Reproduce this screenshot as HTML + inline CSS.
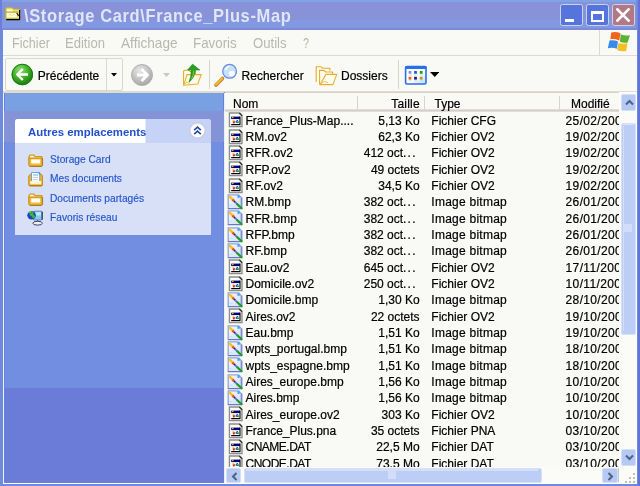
<!DOCTYPE html>
<html><head><meta charset="utf-8">
<style>
*{margin:0;padding:0;box-sizing:border-box}
html,body{width:640px;height:486px;overflow:hidden;background:#6e8ade;font-family:"Liberation Sans",sans-serif}
body{position:relative}
.a{position:absolute}
.t{position:absolute;white-space:nowrap}
.ic{position:absolute}
#title{left:0;top:0;width:640px;height:30px;background:#8892d8}
#menu{left:3px;top:30px;width:634px;height:26px;background:#f9f9f6}
#tool{left:3px;top:56px;width:634px;height:36px;background:#f9f9f6}
#panel{left:3px;top:92px;width:221px;height:391px;background:#728ee0;overflow:hidden}
#list{left:225px;top:92px;width:394px;height:375px;background:#f9f9f6;overflow:hidden}
.lt{position:absolute;white-space:nowrap;font-size:12px;line-height:12px;color:#000;-webkit-text-stroke:0.2px #000}
.mt{position:absolute;white-space:nowrap;font-size:14.5px;line-height:14.5px;color:#b8b8b0}
.tb{position:absolute;white-space:nowrap;font-size:12px;line-height:12px;color:#000;-webkit-text-stroke:0.2px #000}
.pt{position:absolute;white-space:nowrap;font-size:10.2px;line-height:10.2px;color:#2454cc;-webkit-text-stroke:0.15px #2454cc}
.pb{position:absolute;white-space:nowrap;font-size:11.4px;line-height:11.4px;color:#2050c8;font-weight:bold}
</style></head><body><div id="root" style="position:absolute;left:0;top:0;width:640px;height:486px;overflow:hidden;background:#6e8ade;will-change:transform">

<div id="title" class="a">
<div class="a" style="left:0;top:0;width:640px;height:2px;background:#7fa4e4"></div>
<div class="a" style="left:0;top:20px;width:640px;height:8px;background:#8298e0"></div>
<div class="a" style="left:0;top:28px;width:640px;height:2px;background:#7d88d8"></div>
<svg class="a" style="left:2px;top:4px" width="22" height="20" viewBox="2 4 22 20"><path d="M5.8 18.6v-9.6l0.8-1.2h5.6l1 1.4h5.6l0.8 0.9v8.5z" fill="#f2e468" stroke="#c8b820" stroke-width="0.8"/><rect x="7" y="9.6" width="5.6" height="2.2" fill="#fffff4"/><path d="M6 12h12.6" stroke="#a89818" stroke-width="0.9"/><rect x="7" y="13.2" width="9.8" height="4" fill="#fffff0"/><path d="M9 15.6l1.2-1.4 1.4 1.4M12.4 15.6l1.2-1.2 1.2 1.2" stroke="#e8d040" stroke-width="0.8" fill="none"/><path d="M19.6 10v9.6h-13.4" stroke="#000" stroke-width="1.2" fill="none"/><path d="M16.8 13l1.8 2.8" stroke="#202010" stroke-width="1.3"/></svg>
<div class="t" style="left:24px;top:7.63px;font-size:16.5px;line-height:16.5px;font-weight:bold;letter-spacing:0.62px;color:#dfe6f8;transform:scaleY(1.08);transform-origin:0 13.97px">\Storage Card\France_Plus-Map</div>
<div class="a" style="left:559.5px;top:4px;width:23px;height:22px;border-radius:2.5px;background:#5574dc;border:1px solid #c8d4f4"><div class="a" style="left:4px;top:14px;width:9px;height:2.8px;background:#fff"></div></div>
<div class="a" style="left:585.5px;top:4px;width:23px;height:22px;border-radius:2.5px;background:#5574dc;border:1px solid #c8d4f4"><div class="a" style="left:4.5px;top:5.5px;width:13px;height:11px;border:2px solid #fff;border-top-width:3px"></div></div>
<div class="a" style="left:611.5px;top:4px;width:23px;height:22px;border-radius:2.5px;background:#b47882;border:1px solid #c8d4f4"><svg class="a" style="left:3.6px;top:2.6px" width="14" height="14" viewBox="0 0 14 14"><path d="M1.4 1.4L12.6 12.6M12.6 1.4L1.4 12.6" stroke="#fff" stroke-width="2.7" stroke-linecap="square"/></svg></div>
</div>
<div id="menu" class="a"></div>
<div class="mt" style="left:11.8px;top:35.53px;transform:scaleX(0.87);transform-origin:0 0">Fichier</div>
<div class="mt" style="left:65.4px;top:35.53px;transform:scaleX(0.9);transform-origin:0 0">Edition</div>
<div class="mt" style="left:120.8px;top:35.53px;transform:scaleX(0.94);transform-origin:0 0">Affichage</div>
<div class="mt" style="left:193.2px;top:35.53px;transform:scaleX(0.92);transform-origin:0 0">Favoris</div>
<div class="mt" style="left:252.5px;top:35.53px;transform:scaleX(0.905);transform-origin:0 0">Outils</div>
<div class="mt" style="left:302.6px;top:35.53px;transform:scaleX(0.75);transform-origin:0 0">?</div>
<div class="a" style="left:3px;top:55px;width:634px;height:1px;background:#ddd8e0"></div>
<div class="a" style="left:599px;top:30px;width:1px;height:25px;background:#dcdad0"></div>
<svg class="a" style="left:600px;top:28px" width="36" height="27" viewBox="600 28 36 27"><path d="M611.2 32.6q4.5-1.2 9.2 0.6l-1.1 7.2q-4.5-1.6-8.9-1.2z" fill="#f0641e"/><path d="M620.7 34.3q4.6 1.8 9.3 0.9l-2.4 7.2q-3.9 0.8-7.7-0.6z" fill="#5cb034"/><path d="M609.5 40.4q4.3-0.5 8.4 0.8l-0.9 7.5q-4.5-1.4-9.2-0.5z" fill="#3a8ae8"/><path d="M618.4 43q4.5 1.2 9 0.3l-1.2 7.7q-4.5 0.7-8.9-0.8z" fill="#f4c020"/></svg>
<div id="tool" class="a"></div>
<div class="a" style="left:5px;top:57.5px;width:117.5px;height:33px;border:1px solid #dad6cc;border-radius:2px;background:#f9f9f6"></div>
<div class="a" style="left:105.5px;top:58px;width:1px;height:32px;background:#dcd6d4"></div>
<svg class="a" style="left:11.4px;top:63.3px" width="23" height="23" viewBox="0 0 23 23"><defs><radialGradient id="g1" cx="0.4" cy="0.3" r="0.7"><stop offset="0" stop-color="#8ee070"/><stop offset="0.6" stop-color="#3aa820"/><stop offset="1" stop-color="#1c7a10"/></radialGradient></defs><circle cx="11.3" cy="11.5" r="10.7" fill="url(#g1)"/><circle cx="11.3" cy="11.5" r="10.2" fill="none" stroke="#128012" stroke-width="1"/><path d="M11.8 6l-5.6 5.5 5.6 5.5M6.8 11.5h10.2" stroke="#fff" stroke-width="2.4" fill="none" stroke-linejoin="round"/></svg>
<div class="tb" style="left:37.8px;top:69.94px">Précédente</div>
<svg class="a" style="left:110.6px;top:72.8px" width="6" height="4" viewBox="0 0 6 4"><path d="M0 0h6l-3 3.4z" fill="#000"/></svg>
<svg class="a" style="left:131px;top:64px" width="23" height="23" viewBox="0 0 23 23"><defs><radialGradient id="g2" cx="0.4" cy="0.3" r="0.7"><stop offset="0" stop-color="#e8e8e8"/><stop offset="1" stop-color="#a8a8a8"/></radialGradient></defs><circle cx="11" cy="11" r="10.5" fill="url(#g2)" stroke="#b0b0b0"/><path d="M10.5 5l6 6-6 6M16 11h-10" stroke="#fff" stroke-width="2.8" fill="none" stroke-linejoin="round"/></svg>
<svg class="a" style="left:163px;top:73px" width="7" height="4" viewBox="0 0 7 4"><path d="M0 0h7l-3.5 4z" fill="#c8c8c8"/></svg>
<svg class="a" style="left:178px;top:60px" width="28" height="30" viewBox="178 60 28 30"><path d="M183.6 85.2v-14.2l1.2-0.8h4l1.2 1.3h5.5v3" fill="#fffef4" stroke="#e4ac28" stroke-width="1.1"/><path d="M183.8 85.2l3.2-10.6h14.2l-3.4 9.4z" fill="#fffbe8" stroke="#e8b030" stroke-width="1.1"/><path d="M184.5 84.5l2-2.5 3 1.5" stroke="#f0c848" stroke-width="1" fill="none"/><path d="M192.6 64.2l-5 5.8h3.6q0.4 6-2.2 12.2q5.6-4.4 6.4-12.2h4.4z" fill="#2aa020" stroke="#188010" stroke-width="0.6"/><path d="M193.8 70.5q-0.4 5-2.4 9" stroke="#70d050" stroke-width="1" fill="none"/></svg>
<div class="a" style="left:208.5px;top:60px;width:1px;height:29px;background:#d8d6cc"></div>
<svg class="a" style="left:210px;top:60px" width="30" height="30" viewBox="210 60 30 30"><path d="M216 85l6.5-6.5" stroke="#c07818" stroke-width="3.6" stroke-linecap="round"/><path d="M216 84.6l6.2-6.2" stroke="#f0b838" stroke-width="2.2" stroke-linecap="round"/><circle cx="229.6" cy="71.3" r="6.9" fill="#c4e2fc" stroke="#6a90dc" stroke-width="1.3"/><circle cx="231.8" cy="73.6" r="2.8" fill="#fff"/><path d="M225.5 70q1-3 4-3.6" stroke="#fff" stroke-width="1.2" fill="none"/></svg>
<div class="tb" style="left:241.6px;top:69.94px">Rechercher</div>
<svg class="a" style="left:310px;top:60px" width="30" height="30" viewBox="310 60 30 30"><path d="M316.2 82v-15.3h4.8l1.5 1.5h7.3v2.3" fill="#fffef6" stroke="#e4ac28" stroke-width="1.1"/><path d="M319.6 84.6v-14.2h4.4l1.5 1.6h7v2.6" fill="#fffef6" stroke="#e4ac28" stroke-width="1.1"/><path d="M320.2 84.6l5.6-10.2h11l-4 10.2z" fill="#fffdf0" stroke="#e8b030" stroke-width="1.1"/><path d="M321 83.5l3-2 4 1" stroke="#f0c848" stroke-width="1" fill="none"/></svg>
<div class="tb" style="left:341px;top:69.94px">Dossiers</div>
<div class="a" style="left:398px;top:60px;width:1px;height:29px;background:#d8d6cc"></div>
<svg class="a" style="left:400px;top:60px" width="30" height="30" viewBox="400 60 30 30"><defs><linearGradient id="vg" x1="0" y1="0" x2="1" y2="1"><stop offset="0.55" stop-color="#fff"/><stop offset="1" stop-color="#b8dcfc"/></linearGradient></defs><rect x="405.6" y="66.6" width="20.4" height="17.4" rx="1.5" fill="url(#vg)" stroke="#2a6ee8" stroke-width="1.6"/><rect x="405" y="66" width="21.6" height="3" rx="1" fill="#2a6ee8"/><rect x="408.6" y="71" width="2.8" height="2.8" fill="#8090e0"/><rect x="414.1" y="71" width="2.8" height="2.8" fill="#2060e0"/><rect x="419.8" y="71" width="2.8" height="2.8" fill="#20a020"/><rect x="408.6" y="76.8" width="2.8" height="2.8" fill="#f06010"/><rect x="414.1" y="76.8" width="2.8" height="2.8" fill="#102080"/><rect x="419.8" y="76.8" width="2.8" height="2.8" fill="#d09020"/><path d="M408.6 75h3M414.1 75h3M419.8 75h3M408.6 80.8h3M414.1 80.8h3M419.8 80.8h3" stroke="#c8c8c8" stroke-width="0.7"/></svg>
<svg class="a" style="left:429.5px;top:72px" width="9.5" height="5" viewBox="0 0 9.5 5"><path d="M0 0h9.5l-4.75 5z" fill="#000"/></svg>
<div class="a" style="left:3px;top:91px;width:634px;height:1px;background:#e2dccc"></div>
<div id="panel" class="a">
<div class="a" style="left:0;top:0;width:1px;height:391px;background:#f0f4fc"></div>
<div class="a" style="left:1px;top:0;width:220px;height:19px;background:#7aa0e4"></div>
<div class="a" style="left:0;top:0;width:221px;height:1px;background:#e0dccc"></div>
<div class="a" style="left:220px;top:1px;width:1px;height:390px;background:#6a7ee0"></div>
<div class="a" style="left:1px;top:1px;width:1px;height:390px;background:#6a80de"></div>
<div class="a" style="left:1px;top:19px;width:220px;height:31px;background:#8492d8"></div>
<div class="a" style="left:1px;top:296px;width:220px;height:95px;background:#6a7cd8"></div>
<div class="a" style="left:12px;top:27px;width:196px;height:116px;border-radius:3px 3px 0 0;background:#d8e0f8;overflow:hidden">
<div class="a" style="left:0;top:0;width:196px;height:24px;background:linear-gradient(90deg,#fff 0,#fff 130px,#c6d3f7 131px)"></div>
</div>
</div>
<div class="pb" style="left:28px;top:127.35px">Autres emplacements</div>
<svg class="a" style="left:189px;top:122px" width="17" height="17" viewBox="0 0 17 17"><circle cx="8.5" cy="8.5" r="7.6" fill="#fff" stroke="#c8ccd8" stroke-width="1.2"/><path d="M5.2 8.2l3.3-3 3.3 3M5.2 12.2l3.3-3 3.3 3" stroke="#2848a8" stroke-width="1.6" fill="none"/></svg>
<div class="pt" style="left:50px;top:154.97px">Storage Card</div>
<svg class="a" style="left:27.6px;top:154.2px" width="16" height="14" viewBox="0 0 16 14"><path d="M1 4.2v-1.6l1.2-1.4h3.6l1.4 1.4h6.6v3" fill="#fff8e0" stroke="#d89a18" stroke-width="1.3"/><path d="M0.8 11.2v-7.2h13.4v7.4l-0.8 0.8h-11.8z" fill="#f0b830" stroke="#c88810" stroke-width="1"/><rect x="3.2" y="5.4" width="9" height="3.6" fill="#fff"/><path d="M3.2 9.6h9" stroke="#f8d870" stroke-width="1.2"/><path d="M1.6 12.4h12.6M14.6 4.4v7.6" stroke="#806020" stroke-width="0.9" opacity="0.6"/></svg>
<div class="pt" style="left:50px;top:173.97px">Mes documents</div>
<svg class="a" style="left:27.6px;top:172.0px" width="16" height="15" viewBox="0 0 16 15"><path d="M0.8 13.2v-9.4l1.4-1.2h11.4l0.8 1v9.6l-0.8 0.8h-12z" fill="#f0b830" stroke="#c88810" stroke-width="1"/><rect x="3.6" y="0.6" width="8.2" height="10.6" fill="#fff" stroke="#6f8fe0" stroke-width="0.9"/><path d="M5 3h5" stroke="#70c8f0" stroke-width="1.2"/><path d="M5 5.4h5M5 7.6h5" stroke="#b0c4e8" stroke-width="0.9"/><path d="M10.6 0.8l1.6 1.6" stroke="#40a0f0" stroke-width="1.4"/><rect x="2.2" y="9" width="11" height="3.2" fill="#fff4d0"/><path d="M1.6 13.6h12.6" stroke="#806020" stroke-width="0.9" opacity="0.6"/></svg>
<div class="pt" style="left:50px;top:193.57px">Documents partagés</div>
<svg class="a" style="left:27.6px;top:193.2px" width="16" height="14" viewBox="0 0 16 14"><path d="M1 4.2v-1.6l1.2-1.4h3.6l1.4 1.4h6.6v3" fill="#fff8e0" stroke="#d89a18" stroke-width="1.3"/><path d="M0.8 11.2v-7.2h13.4v7.4l-0.8 0.8h-11.8z" fill="#f0b830" stroke="#c88810" stroke-width="1"/><rect x="3.2" y="5.4" width="9" height="3.6" fill="#fff"/><path d="M3.2 9.6h9" stroke="#f8d870" stroke-width="1.2"/><path d="M1.6 12.4h12.6M14.6 4.4v7.6" stroke="#806020" stroke-width="0.9" opacity="0.6"/></svg>
<div class="pt" style="left:50px;top:212.57px">Favoris réseau</div>
<svg class="a" style="left:27.4px;top:210.0px" width="17" height="16" viewBox="0 0 17 16"><rect x="6.4" y="1.2" width="8.6" height="8.8" rx="1" fill="#84ccf8" stroke="#5a78b0" stroke-width="0.9"/><rect x="7.4" y="2.2" width="6.6" height="3.2" fill="#c0e8fc"/><path d="M15.2 1.8v8" stroke="#2a3048" stroke-width="1.1"/><circle cx="4.6" cy="5.2" r="4.3" fill="#1a44c0"/><path d="M2.4 1.6q2.6-1 4.4 0.4l-0.6 2.2 1.8 1.8-0.4 2.4q-2.2 0.4-2.8-2l-2-1.2z" fill="#3cb434"/><path d="M1.2 3.2q1-1.6 2.6-2" stroke="#a0e890" stroke-width="0.8" fill="none"/><ellipse cx="10.6" cy="13.2" rx="4.8" ry="1.9" fill="#eef0f6" stroke="#3a4460" stroke-width="1"/><path d="M10.6 10v1.4" stroke="#5a6480" stroke-width="1.2"/></svg>
<div class="a" style="left:224px;top:93px;width:1px;height:390px;background:#e8eefc"></div>
<div id="list" class="a">
<div class="a" style="left:0;top:0;width:394px;height:18px;background:#f9f9f6"></div>
<div class="a" style="left:0;top:0;width:394px;height:1px;background:#d4d4cc"></div>
<div class="a" style="left:0;top:17px;width:394px;height:1px;background:#e4dae2"></div>
<div class="a" style="left:0;top:18px;width:394px;height:1px;background:#cdd2c2"></div>
<div class="a" style="left:0;top:19px;width:394px;height:1px;background:#deded6"></div>
<div class="a" style="left:132.2px;top:4px;width:1px;height:12.5px;background:#d6d4ca"></div>
<div class="a" style="left:198.8px;top:4px;width:1px;height:12.5px;background:#d6d4ca"></div>
<div class="a" style="left:333.5px;top:4px;width:1px;height:12.5px;background:#d6d4ca"></div>
<div class="lt" style="left:8px;top:6.14px">Nom</div>
<div class="lt" style="right:199.2px;top:6.14px;letter-spacing:0.2px">Taille</div>
<div class="lt" style="left:209.5px;top:6.14px">Type</div>
<div class="lt" style="left:346px;top:6.14px">Modifié</div>
<div class="a" style="left:3.0px;top:20.30px;width:16px;height:16px"><svg class="ic" width="16" height="16" viewBox="0 0 16 16"><path d="M1.45 1.05h10.1l2.4 2.4v11.2h-12.5z" fill="#fff" stroke="#8c8c8c" stroke-width="1.4"/><path d="M11.3 0.9l2.8 2.8" stroke="#383838" stroke-width="1.4"/><rect x="3.2" y="4.6" width="8.8" height="8" fill="#fff"/><rect x="3.2" y="4.6" width="8.8" height="2.5" fill="#000078"/><path d="M12 4.6v8h-8.8" stroke="#000" stroke-width="1.1" fill="none"/><circle cx="4.8" cy="5.4" r="0.8" fill="#f0c030"/><ellipse cx="5.8" cy="9.9" rx="1.1" ry="1.5" fill="#e01818"/><circle cx="5" cy="9" r="0.8" fill="#f0d020"/><circle cx="9.3" cy="8.8" r="0.9" fill="#1838e0"/><circle cx="8.4" cy="9.9" r="0.9" fill="#1838e0"/><circle cx="10.2" cy="10.1" r="0.9" fill="#10a020"/><circle cx="9.3" cy="10.4" r="0.8" fill="#10a020"/><circle cx="9.3" cy="9.6" r="0.6" fill="#20c0e0"/></svg></div>
<div class="lt" style="left:20.5px;top:22.64px">France_Plus-Map....</div>
<div class="lt" style="right:199.4px;top:22.64px">5,13 Ko</div>
<div class="lt" style="left:206.3px;top:22.64px">Fichier CFG</div>
<div class="lt" style="left:340.6px;top:22.64px;letter-spacing:0.35px">25/02/2005</div>
<div class="a" style="left:3.0px;top:36.63px;width:16px;height:16px"><svg class="ic" width="16" height="16" viewBox="0 0 16 16"><path d="M1.45 1.05h10.1l2.4 2.4v11.2h-12.5z" fill="#fff" stroke="#8c8c8c" stroke-width="1.4"/><path d="M11.3 0.9l2.8 2.8" stroke="#383838" stroke-width="1.4"/><rect x="3.2" y="4.6" width="8.8" height="8" fill="#fff"/><rect x="3.2" y="4.6" width="8.8" height="2.5" fill="#000078"/><path d="M12 4.6v8h-8.8" stroke="#000" stroke-width="1.1" fill="none"/><circle cx="4.8" cy="5.4" r="0.8" fill="#f0c030"/><ellipse cx="5.8" cy="9.9" rx="1.1" ry="1.5" fill="#e01818"/><circle cx="5" cy="9" r="0.8" fill="#f0d020"/><circle cx="9.3" cy="8.8" r="0.9" fill="#1838e0"/><circle cx="8.4" cy="9.9" r="0.9" fill="#1838e0"/><circle cx="10.2" cy="10.1" r="0.9" fill="#10a020"/><circle cx="9.3" cy="10.4" r="0.8" fill="#10a020"/><circle cx="9.3" cy="9.6" r="0.6" fill="#20c0e0"/></svg></div>
<div class="lt" style="left:20.5px;top:38.97px">RM.ov2</div>
<div class="lt" style="right:199.4px;top:38.97px">62,3 Ko</div>
<div class="lt" style="left:206.3px;top:38.97px">Fichier OV2</div>
<div class="lt" style="left:340.6px;top:38.97px;letter-spacing:0.35px">19/02/2005</div>
<div class="a" style="left:3.0px;top:52.96px;width:16px;height:16px"><svg class="ic" width="16" height="16" viewBox="0 0 16 16"><path d="M1.45 1.05h10.1l2.4 2.4v11.2h-12.5z" fill="#fff" stroke="#8c8c8c" stroke-width="1.4"/><path d="M11.3 0.9l2.8 2.8" stroke="#383838" stroke-width="1.4"/><rect x="3.2" y="4.6" width="8.8" height="8" fill="#fff"/><rect x="3.2" y="4.6" width="8.8" height="2.5" fill="#000078"/><path d="M12 4.6v8h-8.8" stroke="#000" stroke-width="1.1" fill="none"/><circle cx="4.8" cy="5.4" r="0.8" fill="#f0c030"/><ellipse cx="5.8" cy="9.9" rx="1.1" ry="1.5" fill="#e01818"/><circle cx="5" cy="9" r="0.8" fill="#f0d020"/><circle cx="9.3" cy="8.8" r="0.9" fill="#1838e0"/><circle cx="8.4" cy="9.9" r="0.9" fill="#1838e0"/><circle cx="10.2" cy="10.1" r="0.9" fill="#10a020"/><circle cx="9.3" cy="10.4" r="0.8" fill="#10a020"/><circle cx="9.3" cy="9.6" r="0.6" fill="#20c0e0"/></svg></div>
<div class="lt" style="left:20.5px;top:55.30px">RFR.ov2</div>
<div class="lt" style="right:203.5px;top:55.30px">412 oct<span style="letter-spacing:1.2px">..</span>.</div>
<div class="lt" style="left:206.3px;top:55.30px">Fichier OV2</div>
<div class="lt" style="left:340.6px;top:55.30px;letter-spacing:0.35px">19/02/2005</div>
<div class="a" style="left:3.0px;top:69.29px;width:16px;height:16px"><svg class="ic" width="16" height="16" viewBox="0 0 16 16"><path d="M1.45 1.05h10.1l2.4 2.4v11.2h-12.5z" fill="#fff" stroke="#8c8c8c" stroke-width="1.4"/><path d="M11.3 0.9l2.8 2.8" stroke="#383838" stroke-width="1.4"/><rect x="3.2" y="4.6" width="8.8" height="8" fill="#fff"/><rect x="3.2" y="4.6" width="8.8" height="2.5" fill="#000078"/><path d="M12 4.6v8h-8.8" stroke="#000" stroke-width="1.1" fill="none"/><circle cx="4.8" cy="5.4" r="0.8" fill="#f0c030"/><ellipse cx="5.8" cy="9.9" rx="1.1" ry="1.5" fill="#e01818"/><circle cx="5" cy="9" r="0.8" fill="#f0d020"/><circle cx="9.3" cy="8.8" r="0.9" fill="#1838e0"/><circle cx="8.4" cy="9.9" r="0.9" fill="#1838e0"/><circle cx="10.2" cy="10.1" r="0.9" fill="#10a020"/><circle cx="9.3" cy="10.4" r="0.8" fill="#10a020"/><circle cx="9.3" cy="9.6" r="0.6" fill="#20c0e0"/></svg></div>
<div class="lt" style="left:20.5px;top:71.63px">RFP.ov2</div>
<div class="lt" style="right:199.4px;top:71.63px">49 octets</div>
<div class="lt" style="left:206.3px;top:71.63px">Fichier OV2</div>
<div class="lt" style="left:340.6px;top:71.63px;letter-spacing:0.35px">19/02/2005</div>
<div class="a" style="left:3.0px;top:85.62px;width:16px;height:16px"><svg class="ic" width="16" height="16" viewBox="0 0 16 16"><path d="M1.45 1.05h10.1l2.4 2.4v11.2h-12.5z" fill="#fff" stroke="#8c8c8c" stroke-width="1.4"/><path d="M11.3 0.9l2.8 2.8" stroke="#383838" stroke-width="1.4"/><rect x="3.2" y="4.6" width="8.8" height="8" fill="#fff"/><rect x="3.2" y="4.6" width="8.8" height="2.5" fill="#000078"/><path d="M12 4.6v8h-8.8" stroke="#000" stroke-width="1.1" fill="none"/><circle cx="4.8" cy="5.4" r="0.8" fill="#f0c030"/><ellipse cx="5.8" cy="9.9" rx="1.1" ry="1.5" fill="#e01818"/><circle cx="5" cy="9" r="0.8" fill="#f0d020"/><circle cx="9.3" cy="8.8" r="0.9" fill="#1838e0"/><circle cx="8.4" cy="9.9" r="0.9" fill="#1838e0"/><circle cx="10.2" cy="10.1" r="0.9" fill="#10a020"/><circle cx="9.3" cy="10.4" r="0.8" fill="#10a020"/><circle cx="9.3" cy="9.6" r="0.6" fill="#20c0e0"/></svg></div>
<div class="lt" style="left:20.5px;top:87.96px">RF.ov2</div>
<div class="lt" style="right:199.4px;top:87.96px">34,5 Ko</div>
<div class="lt" style="left:206.3px;top:87.96px">Fichier OV2</div>
<div class="lt" style="left:340.6px;top:87.96px;letter-spacing:0.35px">19/02/2005</div>
<div class="a" style="left:2.2px;top:101.95px;width:16px;height:16px"><svg class="ic" width="17" height="16" viewBox="0 0 17 16"><defs><linearGradient id="bg" x1="0" y1="0" x2="1" y2="1"><stop offset="0" stop-color="#f6f8fe"/><stop offset="1" stop-color="#d0dcf8"/></linearGradient></defs><path d="M1.2 0.9h10.4l2.6 2.6v11.1h-13z" fill="url(#bg)" stroke="#8ea4e0" stroke-width="1.3"/><path d="M10.4 1.2h2.4v2.6h-2.4z" fill="#4aa0f0"/><path d="M1 14.6h13.4M14.9 3.6v11" stroke="#6070b8" stroke-width="0.9"/><path d="M2.9 2.9l2.8 2.8" stroke="#f4c418" stroke-width="2.6" stroke-linecap="round"/><path d="M5.5 5.5l1.6 1.6" stroke="#e84c10" stroke-width="2.4"/><path d="M7.1 7.1l1 1" stroke="#202060" stroke-width="2"/><path d="M8.1 8.1l2.3 2.3" stroke="#5870e8" stroke-width="2"/><path d="M10.4 10.4l4.2 3.8" stroke="#18a018" stroke-width="2.1" stroke-linecap="round"/><path d="M2.5 11.8l3-0.8" stroke="#c0e4fc" stroke-width="1.2"/></svg></div>
<div class="lt" style="left:20.5px;top:104.29px">RM.bmp</div>
<div class="lt" style="right:203.5px;top:104.29px">382 oct<span style="letter-spacing:1.2px">..</span>.</div>
<div class="lt" style="left:206.3px;top:104.29px;letter-spacing:0.25px">Image bitmap</div>
<div class="lt" style="left:340.6px;top:104.29px;letter-spacing:0.35px">26/01/2005</div>
<div class="a" style="left:2.2px;top:118.28px;width:16px;height:16px"><svg class="ic" width="17" height="16" viewBox="0 0 17 16"><defs><linearGradient id="bg" x1="0" y1="0" x2="1" y2="1"><stop offset="0" stop-color="#f6f8fe"/><stop offset="1" stop-color="#d0dcf8"/></linearGradient></defs><path d="M1.2 0.9h10.4l2.6 2.6v11.1h-13z" fill="url(#bg)" stroke="#8ea4e0" stroke-width="1.3"/><path d="M10.4 1.2h2.4v2.6h-2.4z" fill="#4aa0f0"/><path d="M1 14.6h13.4M14.9 3.6v11" stroke="#6070b8" stroke-width="0.9"/><path d="M2.9 2.9l2.8 2.8" stroke="#f4c418" stroke-width="2.6" stroke-linecap="round"/><path d="M5.5 5.5l1.6 1.6" stroke="#e84c10" stroke-width="2.4"/><path d="M7.1 7.1l1 1" stroke="#202060" stroke-width="2"/><path d="M8.1 8.1l2.3 2.3" stroke="#5870e8" stroke-width="2"/><path d="M10.4 10.4l4.2 3.8" stroke="#18a018" stroke-width="2.1" stroke-linecap="round"/><path d="M2.5 11.8l3-0.8" stroke="#c0e4fc" stroke-width="1.2"/></svg></div>
<div class="lt" style="left:20.5px;top:120.62px">RFR.bmp</div>
<div class="lt" style="right:203.5px;top:120.62px">382 oct<span style="letter-spacing:1.2px">..</span>.</div>
<div class="lt" style="left:206.3px;top:120.62px;letter-spacing:0.25px">Image bitmap</div>
<div class="lt" style="left:340.6px;top:120.62px;letter-spacing:0.35px">26/01/2005</div>
<div class="a" style="left:2.2px;top:134.61px;width:16px;height:16px"><svg class="ic" width="17" height="16" viewBox="0 0 17 16"><defs><linearGradient id="bg" x1="0" y1="0" x2="1" y2="1"><stop offset="0" stop-color="#f6f8fe"/><stop offset="1" stop-color="#d0dcf8"/></linearGradient></defs><path d="M1.2 0.9h10.4l2.6 2.6v11.1h-13z" fill="url(#bg)" stroke="#8ea4e0" stroke-width="1.3"/><path d="M10.4 1.2h2.4v2.6h-2.4z" fill="#4aa0f0"/><path d="M1 14.6h13.4M14.9 3.6v11" stroke="#6070b8" stroke-width="0.9"/><path d="M2.9 2.9l2.8 2.8" stroke="#f4c418" stroke-width="2.6" stroke-linecap="round"/><path d="M5.5 5.5l1.6 1.6" stroke="#e84c10" stroke-width="2.4"/><path d="M7.1 7.1l1 1" stroke="#202060" stroke-width="2"/><path d="M8.1 8.1l2.3 2.3" stroke="#5870e8" stroke-width="2"/><path d="M10.4 10.4l4.2 3.8" stroke="#18a018" stroke-width="2.1" stroke-linecap="round"/><path d="M2.5 11.8l3-0.8" stroke="#c0e4fc" stroke-width="1.2"/></svg></div>
<div class="lt" style="left:20.5px;top:136.95px">RFP.bmp</div>
<div class="lt" style="right:203.5px;top:136.95px">382 oct<span style="letter-spacing:1.2px">..</span>.</div>
<div class="lt" style="left:206.3px;top:136.95px;letter-spacing:0.25px">Image bitmap</div>
<div class="lt" style="left:340.6px;top:136.95px;letter-spacing:0.35px">26/01/2005</div>
<div class="a" style="left:2.2px;top:150.94px;width:16px;height:16px"><svg class="ic" width="17" height="16" viewBox="0 0 17 16"><defs><linearGradient id="bg" x1="0" y1="0" x2="1" y2="1"><stop offset="0" stop-color="#f6f8fe"/><stop offset="1" stop-color="#d0dcf8"/></linearGradient></defs><path d="M1.2 0.9h10.4l2.6 2.6v11.1h-13z" fill="url(#bg)" stroke="#8ea4e0" stroke-width="1.3"/><path d="M10.4 1.2h2.4v2.6h-2.4z" fill="#4aa0f0"/><path d="M1 14.6h13.4M14.9 3.6v11" stroke="#6070b8" stroke-width="0.9"/><path d="M2.9 2.9l2.8 2.8" stroke="#f4c418" stroke-width="2.6" stroke-linecap="round"/><path d="M5.5 5.5l1.6 1.6" stroke="#e84c10" stroke-width="2.4"/><path d="M7.1 7.1l1 1" stroke="#202060" stroke-width="2"/><path d="M8.1 8.1l2.3 2.3" stroke="#5870e8" stroke-width="2"/><path d="M10.4 10.4l4.2 3.8" stroke="#18a018" stroke-width="2.1" stroke-linecap="round"/><path d="M2.5 11.8l3-0.8" stroke="#c0e4fc" stroke-width="1.2"/></svg></div>
<div class="lt" style="left:20.5px;top:153.28px">RF.bmp</div>
<div class="lt" style="right:203.5px;top:153.28px">382 oct<span style="letter-spacing:1.2px">..</span>.</div>
<div class="lt" style="left:206.3px;top:153.28px;letter-spacing:0.25px">Image bitmap</div>
<div class="lt" style="left:340.6px;top:153.28px;letter-spacing:0.35px">26/01/2005</div>
<div class="a" style="left:3.0px;top:167.27px;width:16px;height:16px"><svg class="ic" width="16" height="16" viewBox="0 0 16 16"><path d="M1.45 1.05h10.1l2.4 2.4v11.2h-12.5z" fill="#fff" stroke="#8c8c8c" stroke-width="1.4"/><path d="M11.3 0.9l2.8 2.8" stroke="#383838" stroke-width="1.4"/><rect x="3.2" y="4.6" width="8.8" height="8" fill="#fff"/><rect x="3.2" y="4.6" width="8.8" height="2.5" fill="#000078"/><path d="M12 4.6v8h-8.8" stroke="#000" stroke-width="1.1" fill="none"/><circle cx="4.8" cy="5.4" r="0.8" fill="#f0c030"/><ellipse cx="5.8" cy="9.9" rx="1.1" ry="1.5" fill="#e01818"/><circle cx="5" cy="9" r="0.8" fill="#f0d020"/><circle cx="9.3" cy="8.8" r="0.9" fill="#1838e0"/><circle cx="8.4" cy="9.9" r="0.9" fill="#1838e0"/><circle cx="10.2" cy="10.1" r="0.9" fill="#10a020"/><circle cx="9.3" cy="10.4" r="0.8" fill="#10a020"/><circle cx="9.3" cy="9.6" r="0.6" fill="#20c0e0"/></svg></div>
<div class="lt" style="left:20.5px;top:169.61px">Eau.ov2</div>
<div class="lt" style="right:203.5px;top:169.61px">645 oct<span style="letter-spacing:1.2px">..</span>.</div>
<div class="lt" style="left:206.3px;top:169.61px">Fichier OV2</div>
<div class="lt" style="left:340.6px;top:169.61px;letter-spacing:0.35px">17/11/2004</div>
<div class="a" style="left:3.0px;top:183.60px;width:16px;height:16px"><svg class="ic" width="16" height="16" viewBox="0 0 16 16"><path d="M1.45 1.05h10.1l2.4 2.4v11.2h-12.5z" fill="#fff" stroke="#8c8c8c" stroke-width="1.4"/><path d="M11.3 0.9l2.8 2.8" stroke="#383838" stroke-width="1.4"/><rect x="3.2" y="4.6" width="8.8" height="8" fill="#fff"/><rect x="3.2" y="4.6" width="8.8" height="2.5" fill="#000078"/><path d="M12 4.6v8h-8.8" stroke="#000" stroke-width="1.1" fill="none"/><circle cx="4.8" cy="5.4" r="0.8" fill="#f0c030"/><ellipse cx="5.8" cy="9.9" rx="1.1" ry="1.5" fill="#e01818"/><circle cx="5" cy="9" r="0.8" fill="#f0d020"/><circle cx="9.3" cy="8.8" r="0.9" fill="#1838e0"/><circle cx="8.4" cy="9.9" r="0.9" fill="#1838e0"/><circle cx="10.2" cy="10.1" r="0.9" fill="#10a020"/><circle cx="9.3" cy="10.4" r="0.8" fill="#10a020"/><circle cx="9.3" cy="9.6" r="0.6" fill="#20c0e0"/></svg></div>
<div class="lt" style="left:20.5px;top:185.94px">Domicile.ov2</div>
<div class="lt" style="right:203.5px;top:185.94px">250 oct<span style="letter-spacing:1.2px">..</span>.</div>
<div class="lt" style="left:206.3px;top:185.94px">Fichier OV2</div>
<div class="lt" style="left:340.6px;top:185.94px;letter-spacing:0.35px">10/11/2004</div>
<div class="a" style="left:2.2px;top:199.93px;width:16px;height:16px"><svg class="ic" width="17" height="16" viewBox="0 0 17 16"><defs><linearGradient id="bg" x1="0" y1="0" x2="1" y2="1"><stop offset="0" stop-color="#f6f8fe"/><stop offset="1" stop-color="#d0dcf8"/></linearGradient></defs><path d="M1.2 0.9h10.4l2.6 2.6v11.1h-13z" fill="url(#bg)" stroke="#8ea4e0" stroke-width="1.3"/><path d="M10.4 1.2h2.4v2.6h-2.4z" fill="#4aa0f0"/><path d="M1 14.6h13.4M14.9 3.6v11" stroke="#6070b8" stroke-width="0.9"/><path d="M2.9 2.9l2.8 2.8" stroke="#f4c418" stroke-width="2.6" stroke-linecap="round"/><path d="M5.5 5.5l1.6 1.6" stroke="#e84c10" stroke-width="2.4"/><path d="M7.1 7.1l1 1" stroke="#202060" stroke-width="2"/><path d="M8.1 8.1l2.3 2.3" stroke="#5870e8" stroke-width="2"/><path d="M10.4 10.4l4.2 3.8" stroke="#18a018" stroke-width="2.1" stroke-linecap="round"/><path d="M2.5 11.8l3-0.8" stroke="#c0e4fc" stroke-width="1.2"/></svg></div>
<div class="lt" style="left:20.5px;top:202.27px">Domicile.bmp</div>
<div class="lt" style="right:199.4px;top:202.27px">1,30 Ko</div>
<div class="lt" style="left:206.3px;top:202.27px;letter-spacing:0.25px">Image bitmap</div>
<div class="lt" style="left:340.6px;top:202.27px;letter-spacing:0.35px">28/10/2004</div>
<div class="a" style="left:3.0px;top:216.26px;width:16px;height:16px"><svg class="ic" width="16" height="16" viewBox="0 0 16 16"><path d="M1.45 1.05h10.1l2.4 2.4v11.2h-12.5z" fill="#fff" stroke="#8c8c8c" stroke-width="1.4"/><path d="M11.3 0.9l2.8 2.8" stroke="#383838" stroke-width="1.4"/><rect x="3.2" y="4.6" width="8.8" height="8" fill="#fff"/><rect x="3.2" y="4.6" width="8.8" height="2.5" fill="#000078"/><path d="M12 4.6v8h-8.8" stroke="#000" stroke-width="1.1" fill="none"/><circle cx="4.8" cy="5.4" r="0.8" fill="#f0c030"/><ellipse cx="5.8" cy="9.9" rx="1.1" ry="1.5" fill="#e01818"/><circle cx="5" cy="9" r="0.8" fill="#f0d020"/><circle cx="9.3" cy="8.8" r="0.9" fill="#1838e0"/><circle cx="8.4" cy="9.9" r="0.9" fill="#1838e0"/><circle cx="10.2" cy="10.1" r="0.9" fill="#10a020"/><circle cx="9.3" cy="10.4" r="0.8" fill="#10a020"/><circle cx="9.3" cy="9.6" r="0.6" fill="#20c0e0"/></svg></div>
<div class="lt" style="left:20.5px;top:218.60px">Aires.ov2</div>
<div class="lt" style="right:199.4px;top:218.60px">22 octets</div>
<div class="lt" style="left:206.3px;top:218.60px">Fichier OV2</div>
<div class="lt" style="left:340.6px;top:218.60px;letter-spacing:0.35px">19/10/2004</div>
<div class="a" style="left:2.2px;top:232.59px;width:16px;height:16px"><svg class="ic" width="17" height="16" viewBox="0 0 17 16"><defs><linearGradient id="bg" x1="0" y1="0" x2="1" y2="1"><stop offset="0" stop-color="#f6f8fe"/><stop offset="1" stop-color="#d0dcf8"/></linearGradient></defs><path d="M1.2 0.9h10.4l2.6 2.6v11.1h-13z" fill="url(#bg)" stroke="#8ea4e0" stroke-width="1.3"/><path d="M10.4 1.2h2.4v2.6h-2.4z" fill="#4aa0f0"/><path d="M1 14.6h13.4M14.9 3.6v11" stroke="#6070b8" stroke-width="0.9"/><path d="M2.9 2.9l2.8 2.8" stroke="#f4c418" stroke-width="2.6" stroke-linecap="round"/><path d="M5.5 5.5l1.6 1.6" stroke="#e84c10" stroke-width="2.4"/><path d="M7.1 7.1l1 1" stroke="#202060" stroke-width="2"/><path d="M8.1 8.1l2.3 2.3" stroke="#5870e8" stroke-width="2"/><path d="M10.4 10.4l4.2 3.8" stroke="#18a018" stroke-width="2.1" stroke-linecap="round"/><path d="M2.5 11.8l3-0.8" stroke="#c0e4fc" stroke-width="1.2"/></svg></div>
<div class="lt" style="left:20.5px;top:234.93px">Eau.bmp</div>
<div class="lt" style="right:199.4px;top:234.93px">1,51 Ko</div>
<div class="lt" style="left:206.3px;top:234.93px;letter-spacing:0.25px">Image bitmap</div>
<div class="lt" style="left:340.6px;top:234.93px;letter-spacing:0.35px">19/10/2004</div>
<div class="a" style="left:2.2px;top:248.92px;width:16px;height:16px"><svg class="ic" width="17" height="16" viewBox="0 0 17 16"><defs><linearGradient id="bg" x1="0" y1="0" x2="1" y2="1"><stop offset="0" stop-color="#f6f8fe"/><stop offset="1" stop-color="#d0dcf8"/></linearGradient></defs><path d="M1.2 0.9h10.4l2.6 2.6v11.1h-13z" fill="url(#bg)" stroke="#8ea4e0" stroke-width="1.3"/><path d="M10.4 1.2h2.4v2.6h-2.4z" fill="#4aa0f0"/><path d="M1 14.6h13.4M14.9 3.6v11" stroke="#6070b8" stroke-width="0.9"/><path d="M2.9 2.9l2.8 2.8" stroke="#f4c418" stroke-width="2.6" stroke-linecap="round"/><path d="M5.5 5.5l1.6 1.6" stroke="#e84c10" stroke-width="2.4"/><path d="M7.1 7.1l1 1" stroke="#202060" stroke-width="2"/><path d="M8.1 8.1l2.3 2.3" stroke="#5870e8" stroke-width="2"/><path d="M10.4 10.4l4.2 3.8" stroke="#18a018" stroke-width="2.1" stroke-linecap="round"/><path d="M2.5 11.8l3-0.8" stroke="#c0e4fc" stroke-width="1.2"/></svg></div>
<div class="lt" style="left:20.5px;top:251.26px">wpts_portugal.bmp</div>
<div class="lt" style="right:199.4px;top:251.26px">1,51 Ko</div>
<div class="lt" style="left:206.3px;top:251.26px;letter-spacing:0.25px">Image bitmap</div>
<div class="lt" style="left:340.6px;top:251.26px;letter-spacing:0.35px">18/10/2004</div>
<div class="a" style="left:2.2px;top:265.25px;width:16px;height:16px"><svg class="ic" width="17" height="16" viewBox="0 0 17 16"><defs><linearGradient id="bg" x1="0" y1="0" x2="1" y2="1"><stop offset="0" stop-color="#f6f8fe"/><stop offset="1" stop-color="#d0dcf8"/></linearGradient></defs><path d="M1.2 0.9h10.4l2.6 2.6v11.1h-13z" fill="url(#bg)" stroke="#8ea4e0" stroke-width="1.3"/><path d="M10.4 1.2h2.4v2.6h-2.4z" fill="#4aa0f0"/><path d="M1 14.6h13.4M14.9 3.6v11" stroke="#6070b8" stroke-width="0.9"/><path d="M2.9 2.9l2.8 2.8" stroke="#f4c418" stroke-width="2.6" stroke-linecap="round"/><path d="M5.5 5.5l1.6 1.6" stroke="#e84c10" stroke-width="2.4"/><path d="M7.1 7.1l1 1" stroke="#202060" stroke-width="2"/><path d="M8.1 8.1l2.3 2.3" stroke="#5870e8" stroke-width="2"/><path d="M10.4 10.4l4.2 3.8" stroke="#18a018" stroke-width="2.1" stroke-linecap="round"/><path d="M2.5 11.8l3-0.8" stroke="#c0e4fc" stroke-width="1.2"/></svg></div>
<div class="lt" style="left:20.5px;top:267.59px">wpts_espagne.bmp</div>
<div class="lt" style="right:199.4px;top:267.59px">1,51 Ko</div>
<div class="lt" style="left:206.3px;top:267.59px;letter-spacing:0.25px">Image bitmap</div>
<div class="lt" style="left:340.6px;top:267.59px;letter-spacing:0.35px">18/10/2004</div>
<div class="a" style="left:2.2px;top:281.58px;width:16px;height:16px"><svg class="ic" width="17" height="16" viewBox="0 0 17 16"><defs><linearGradient id="bg" x1="0" y1="0" x2="1" y2="1"><stop offset="0" stop-color="#f6f8fe"/><stop offset="1" stop-color="#d0dcf8"/></linearGradient></defs><path d="M1.2 0.9h10.4l2.6 2.6v11.1h-13z" fill="url(#bg)" stroke="#8ea4e0" stroke-width="1.3"/><path d="M10.4 1.2h2.4v2.6h-2.4z" fill="#4aa0f0"/><path d="M1 14.6h13.4M14.9 3.6v11" stroke="#6070b8" stroke-width="0.9"/><path d="M2.9 2.9l2.8 2.8" stroke="#f4c418" stroke-width="2.6" stroke-linecap="round"/><path d="M5.5 5.5l1.6 1.6" stroke="#e84c10" stroke-width="2.4"/><path d="M7.1 7.1l1 1" stroke="#202060" stroke-width="2"/><path d="M8.1 8.1l2.3 2.3" stroke="#5870e8" stroke-width="2"/><path d="M10.4 10.4l4.2 3.8" stroke="#18a018" stroke-width="2.1" stroke-linecap="round"/><path d="M2.5 11.8l3-0.8" stroke="#c0e4fc" stroke-width="1.2"/></svg></div>
<div class="lt" style="left:20.5px;top:283.92px">Aires_europe.bmp</div>
<div class="lt" style="right:199.4px;top:283.92px">1,56 Ko</div>
<div class="lt" style="left:206.3px;top:283.92px;letter-spacing:0.25px">Image bitmap</div>
<div class="lt" style="left:340.6px;top:283.92px;letter-spacing:0.35px">10/10/2004</div>
<div class="a" style="left:2.2px;top:297.91px;width:16px;height:16px"><svg class="ic" width="17" height="16" viewBox="0 0 17 16"><defs><linearGradient id="bg" x1="0" y1="0" x2="1" y2="1"><stop offset="0" stop-color="#f6f8fe"/><stop offset="1" stop-color="#d0dcf8"/></linearGradient></defs><path d="M1.2 0.9h10.4l2.6 2.6v11.1h-13z" fill="url(#bg)" stroke="#8ea4e0" stroke-width="1.3"/><path d="M10.4 1.2h2.4v2.6h-2.4z" fill="#4aa0f0"/><path d="M1 14.6h13.4M14.9 3.6v11" stroke="#6070b8" stroke-width="0.9"/><path d="M2.9 2.9l2.8 2.8" stroke="#f4c418" stroke-width="2.6" stroke-linecap="round"/><path d="M5.5 5.5l1.6 1.6" stroke="#e84c10" stroke-width="2.4"/><path d="M7.1 7.1l1 1" stroke="#202060" stroke-width="2"/><path d="M8.1 8.1l2.3 2.3" stroke="#5870e8" stroke-width="2"/><path d="M10.4 10.4l4.2 3.8" stroke="#18a018" stroke-width="2.1" stroke-linecap="round"/><path d="M2.5 11.8l3-0.8" stroke="#c0e4fc" stroke-width="1.2"/></svg></div>
<div class="lt" style="left:20.5px;top:300.25px">Aires.bmp</div>
<div class="lt" style="right:199.4px;top:300.25px">1,56 Ko</div>
<div class="lt" style="left:206.3px;top:300.25px;letter-spacing:0.25px">Image bitmap</div>
<div class="lt" style="left:340.6px;top:300.25px;letter-spacing:0.35px">10/10/2004</div>
<div class="a" style="left:3.0px;top:314.24px;width:16px;height:16px"><svg class="ic" width="16" height="16" viewBox="0 0 16 16"><path d="M1.45 1.05h10.1l2.4 2.4v11.2h-12.5z" fill="#fff" stroke="#8c8c8c" stroke-width="1.4"/><path d="M11.3 0.9l2.8 2.8" stroke="#383838" stroke-width="1.4"/><rect x="3.2" y="4.6" width="8.8" height="8" fill="#fff"/><rect x="3.2" y="4.6" width="8.8" height="2.5" fill="#000078"/><path d="M12 4.6v8h-8.8" stroke="#000" stroke-width="1.1" fill="none"/><circle cx="4.8" cy="5.4" r="0.8" fill="#f0c030"/><ellipse cx="5.8" cy="9.9" rx="1.1" ry="1.5" fill="#e01818"/><circle cx="5" cy="9" r="0.8" fill="#f0d020"/><circle cx="9.3" cy="8.8" r="0.9" fill="#1838e0"/><circle cx="8.4" cy="9.9" r="0.9" fill="#1838e0"/><circle cx="10.2" cy="10.1" r="0.9" fill="#10a020"/><circle cx="9.3" cy="10.4" r="0.8" fill="#10a020"/><circle cx="9.3" cy="9.6" r="0.6" fill="#20c0e0"/></svg></div>
<div class="lt" style="left:20.5px;top:316.58px">Aires_europe.ov2</div>
<div class="lt" style="right:199.4px;top:316.58px">303 Ko</div>
<div class="lt" style="left:206.3px;top:316.58px">Fichier OV2</div>
<div class="lt" style="left:340.6px;top:316.58px;letter-spacing:0.35px">10/10/2004</div>
<div class="a" style="left:3.0px;top:330.57px;width:16px;height:16px"><svg class="ic" width="16" height="16" viewBox="0 0 16 16"><path d="M1.45 1.05h10.1l2.4 2.4v11.2h-12.5z" fill="#fff" stroke="#8c8c8c" stroke-width="1.4"/><path d="M11.3 0.9l2.8 2.8" stroke="#383838" stroke-width="1.4"/><rect x="3.2" y="4.6" width="8.8" height="8" fill="#fff"/><rect x="3.2" y="4.6" width="8.8" height="2.5" fill="#000078"/><path d="M12 4.6v8h-8.8" stroke="#000" stroke-width="1.1" fill="none"/><circle cx="4.8" cy="5.4" r="0.8" fill="#f0c030"/><ellipse cx="5.8" cy="9.9" rx="1.1" ry="1.5" fill="#e01818"/><circle cx="5" cy="9" r="0.8" fill="#f0d020"/><circle cx="9.3" cy="8.8" r="0.9" fill="#1838e0"/><circle cx="8.4" cy="9.9" r="0.9" fill="#1838e0"/><circle cx="10.2" cy="10.1" r="0.9" fill="#10a020"/><circle cx="9.3" cy="10.4" r="0.8" fill="#10a020"/><circle cx="9.3" cy="9.6" r="0.6" fill="#20c0e0"/></svg></div>
<div class="lt" style="left:20.5px;top:332.91px">France_Plus.pna</div>
<div class="lt" style="right:199.4px;top:332.91px">35 octets</div>
<div class="lt" style="left:206.3px;top:332.91px">Fichier PNA</div>
<div class="lt" style="left:340.6px;top:332.91px;letter-spacing:0.35px">03/10/2004</div>
<div class="a" style="left:3.0px;top:346.90px;width:16px;height:16px"><svg class="ic" width="16" height="16" viewBox="0 0 16 16"><path d="M1.45 1.05h10.1l2.4 2.4v11.2h-12.5z" fill="#fff" stroke="#8c8c8c" stroke-width="1.4"/><path d="M11.3 0.9l2.8 2.8" stroke="#383838" stroke-width="1.4"/><rect x="3.2" y="4.6" width="8.8" height="8" fill="#fff"/><rect x="3.2" y="4.6" width="8.8" height="2.5" fill="#000078"/><path d="M12 4.6v8h-8.8" stroke="#000" stroke-width="1.1" fill="none"/><circle cx="4.8" cy="5.4" r="0.8" fill="#f0c030"/><ellipse cx="5.8" cy="9.9" rx="1.1" ry="1.5" fill="#e01818"/><circle cx="5" cy="9" r="0.8" fill="#f0d020"/><circle cx="9.3" cy="8.8" r="0.9" fill="#1838e0"/><circle cx="8.4" cy="9.9" r="0.9" fill="#1838e0"/><circle cx="10.2" cy="10.1" r="0.9" fill="#10a020"/><circle cx="9.3" cy="10.4" r="0.8" fill="#10a020"/><circle cx="9.3" cy="9.6" r="0.6" fill="#20c0e0"/></svg></div>
<div class="lt" style="left:20.5px;top:349.24px;letter-spacing:-0.5px">CNAME.DAT</div>
<div class="lt" style="right:199.4px;top:349.24px">22,5 Mo</div>
<div class="lt" style="left:206.3px;top:349.24px">Fichier DAT</div>
<div class="lt" style="left:340.6px;top:349.24px;letter-spacing:0.35px">03/10/2004</div>
<div class="a" style="left:3.0px;top:363.23px;width:16px;height:16px"><svg class="ic" width="16" height="16" viewBox="0 0 16 16"><path d="M1.45 1.05h10.1l2.4 2.4v11.2h-12.5z" fill="#fff" stroke="#8c8c8c" stroke-width="1.4"/><path d="M11.3 0.9l2.8 2.8" stroke="#383838" stroke-width="1.4"/><rect x="3.2" y="4.6" width="8.8" height="8" fill="#fff"/><rect x="3.2" y="4.6" width="8.8" height="2.5" fill="#000078"/><path d="M12 4.6v8h-8.8" stroke="#000" stroke-width="1.1" fill="none"/><circle cx="4.8" cy="5.4" r="0.8" fill="#f0c030"/><ellipse cx="5.8" cy="9.9" rx="1.1" ry="1.5" fill="#e01818"/><circle cx="5" cy="9" r="0.8" fill="#f0d020"/><circle cx="9.3" cy="8.8" r="0.9" fill="#1838e0"/><circle cx="8.4" cy="9.9" r="0.9" fill="#1838e0"/><circle cx="10.2" cy="10.1" r="0.9" fill="#10a020"/><circle cx="9.3" cy="10.4" r="0.8" fill="#10a020"/><circle cx="9.3" cy="9.6" r="0.6" fill="#20c0e0"/></svg></div>
<div class="lt" style="left:20.5px;top:365.57px;letter-spacing:-0.5px">CNODE.DAT</div>
<div class="lt" style="right:199.4px;top:365.57px">73,5 Mo</div>
<div class="lt" style="left:206.3px;top:365.57px">Fichier DAT</div>
<div class="lt" style="left:340.6px;top:365.57px;letter-spacing:0.35px">03/10/2004</div>
</div>
<div class="a" style="left:619px;top:92px;width:18px;height:375px;background:#fbfbf8"></div>
<div class="a" style="left:621px;top:94px;width:15px;height:17px;background:#b6c8f4;border:1px solid #d4def8;border-radius:2px"><svg class="a" style="left:3px;top:4px" width="9" height="7" viewBox="0 0 9 7"><path d="M1 5.5l3.5-3.5 3.5 3.5" stroke="#4d6185" stroke-width="2" fill="none"/></svg></div>
<div class="a" style="left:621px;top:448.5px;width:15px;height:17px;background:#b6c8f4;border:1px solid #d4def8;border-radius:2px"><svg class="a" style="left:3px;top:4px" width="9" height="7" viewBox="0 0 9 7"><path d="M1 1.5l3.5 3.5 3.5-3.5" stroke="#4d6185" stroke-width="2" fill="none"/></svg></div>
<div class="a" style="left:621px;top:122.6px;width:15px;height:212px;background:#bccdf6;border:1px solid #d6e0f8;border-radius:2px"></div>
<div class="a" style="left:622.5px;top:126px;width:1.5px;height:205px;background:#d4defa"></div>
<div class="a" style="left:622px;top:123.6px;width:12px;height:1px;background:#d8e2fa"></div>
<svg class="a" style="left:624px;top:224px" width="8" height="8" viewBox="0 0 8 8"><path d="M0 1h8M0 3h8M0 5h8M0 7h8" stroke="#e8eefc" stroke-width="1"/></svg>
<div class="a" style="left:225px;top:467px;width:394px;height:16px;background:#fbfbf8"></div>
<div class="a" style="left:225.5px;top:467.5px;width:15px;height:15px;background:#b6c8f4;border:1px solid #d4def8;border-radius:2px"><svg class="a" style="left:4px;top:3px" width="7" height="9" viewBox="0 0 7 9"><path d="M5.5 1l-3.5 3.5 3.5 3.5" stroke="#4d6185" stroke-width="2" fill="none"/></svg></div>
<div class="a" style="left:601.5px;top:468px;width:16px;height:15px;background:#b6c8f4;border:1px solid #d4def8;border-radius:2px"><svg class="a" style="left:4px;top:3px" width="7" height="9" viewBox="0 0 7 9"><path d="M1.5 1l3.5 3.5-3.5 3.5" stroke="#4d6185" stroke-width="2" fill="none"/></svg></div>
<div class="a" style="left:243.5px;top:467.5px;width:298px;height:15px;background:#bccdf6;border:1px solid #d6e0f8;border-radius:2px"></div>
<div class="a" style="left:246px;top:469px;width:292px;height:1.5px;background:#d4defa"></div>
<svg class="a" style="left:388px;top:471px" width="8" height="8" viewBox="0 0 8 8"><path d="M1 0v8M3 0v8M5 0v8M7 0v8" stroke="#e8eefc" stroke-width="1"/></svg>
<div class="a" style="left:618px;top:467px;width:19px;height:16px;background:#fbfbf8"></div>
<div class="a" style="left:618px;top:468px;width:1px;height:14px;background:#c8c8c0"></div>
<div class="a" style="left:3px;top:483px;width:634px;height:1px;background:#fcfcfc"></div>
<svg class="a" style="left:622.5px;top:471px" width="14" height="13" viewBox="0 0 14 13"><g fill="#c0c0b8"><rect x="10" y="2" width="2" height="2"/><rect x="6" y="6" width="2" height="2"/><rect x="10" y="6" width="2" height="2"/><rect x="2" y="10" width="2" height="2"/><rect x="6" y="10" width="2" height="2"/><rect x="10" y="10" width="2" height="2"/></g></svg>
<div class="a" style="left:637px;top:0;width:3px;height:486px;background:linear-gradient(90deg,#6c8ae0 0,#6c8ae0 1px,#6272d6 1px)"></div>
<div class="a" style="left:636px;top:0;width:1px;height:30px;background:#7a8ee0"></div>
<div class="a" style="left:0;top:0;width:2px;height:30px;background:#6a7edc"></div>
</div></body></html>
